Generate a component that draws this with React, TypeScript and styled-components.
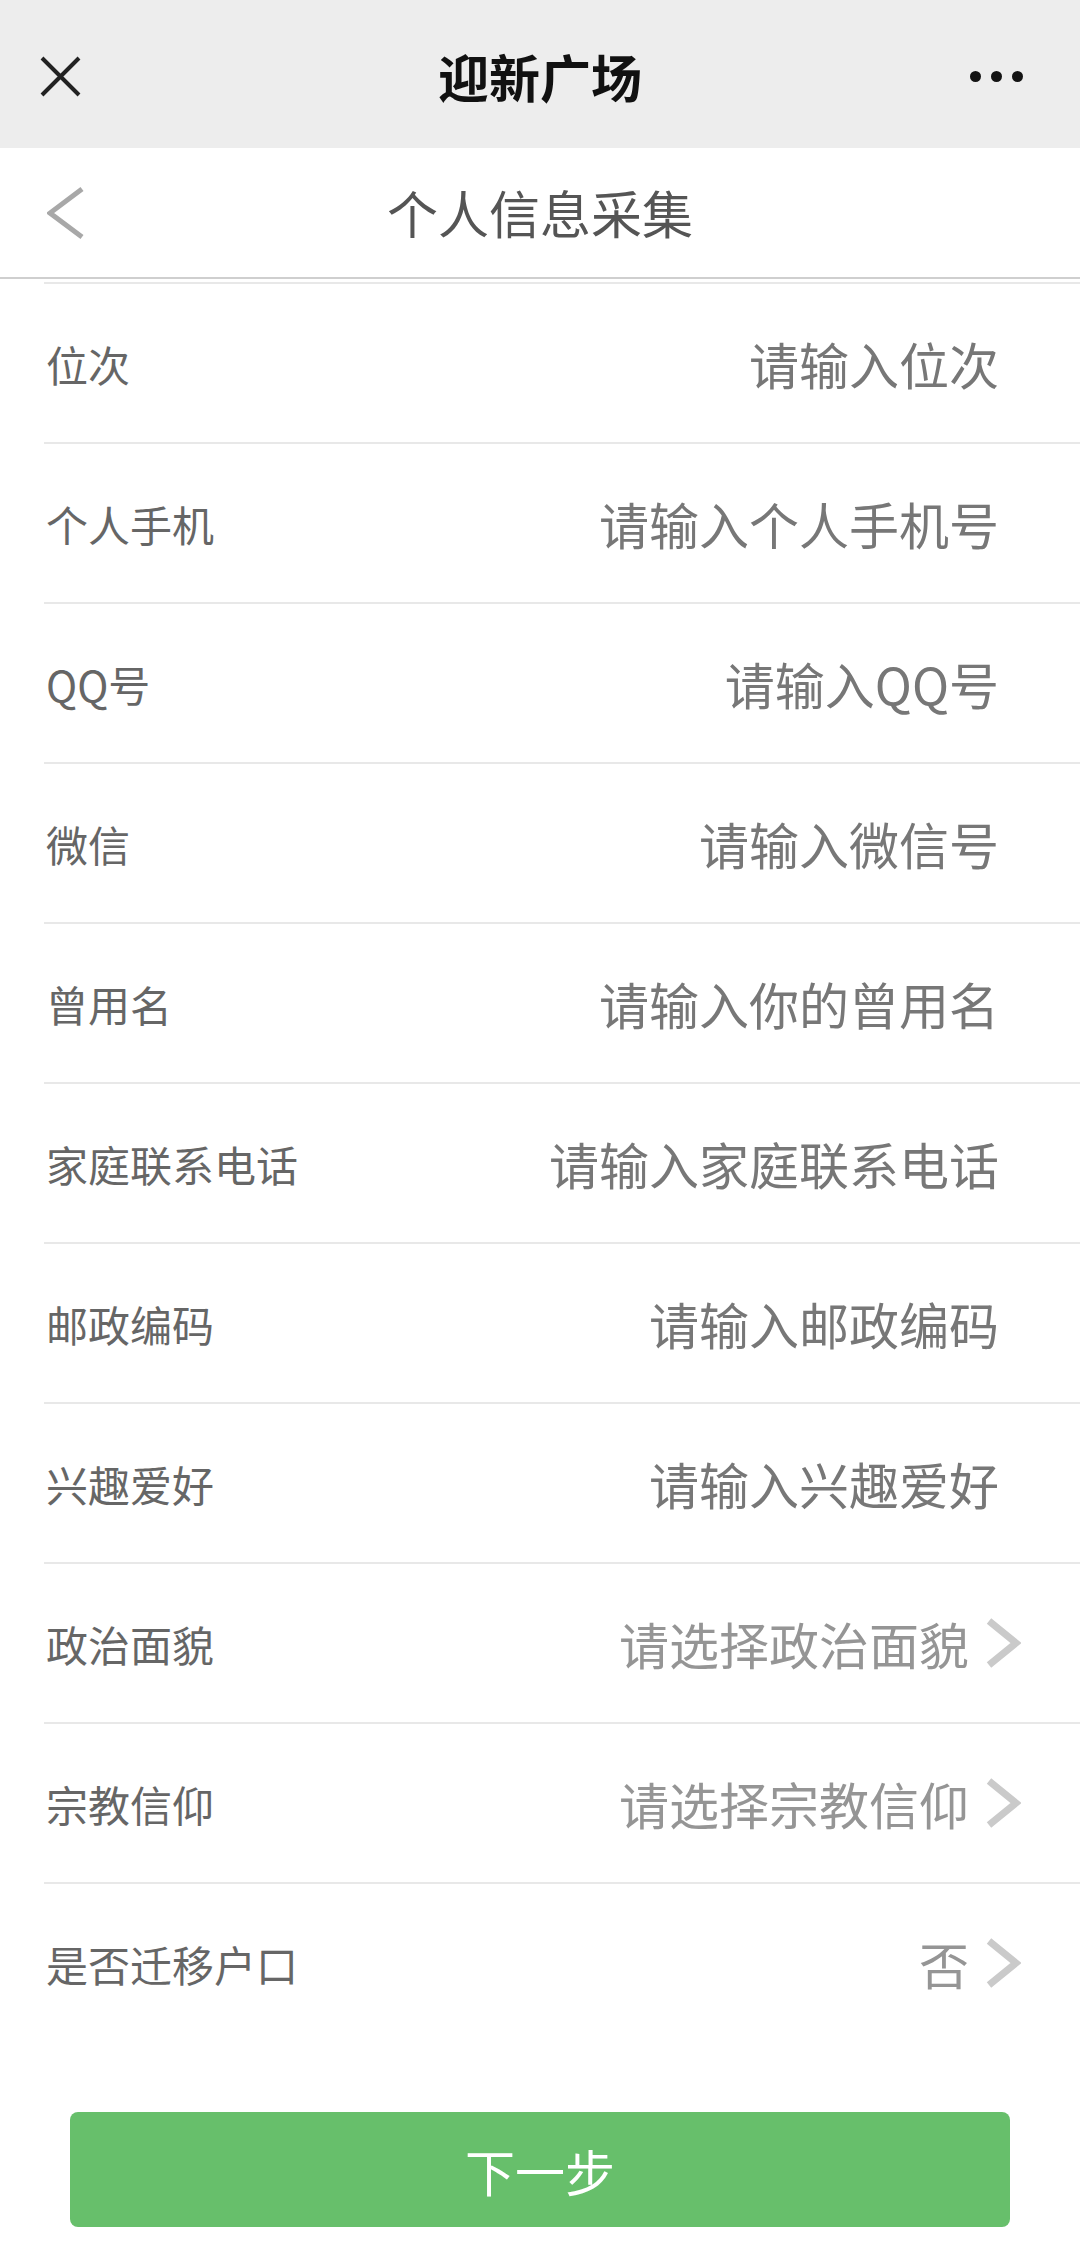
import React from "react";
import styled, { createGlobalStyle } from "styled-components";

const GlobalStyle = createGlobalStyle`
  html, body {
    margin: 0;
    padding: 0;
    background: #ffffff;
  }
  body {
    font-family: "Noto Sans CJK SC", "Noto Sans", sans-serif;
  }
  * {
    box-sizing: border-box;
  }
`;

const Page = styled.div`
  width: 1080px;
  min-height: 2260px;
  background: #ffffff;
  display: flex;
  flex-direction: column;
`;

const TopBar = styled.div`
  height: 148px;
  background: #ededed;
  display: grid;
  grid-template-columns: 1fr auto 1fr;
  align-items: center;
  padding-top: 4px;
`;

const TopTitle = styled.div`
  font-size: 51px;
  font-weight: 700;
  color: #111111;
  line-height: 1;
`;

const LeftSlot = styled.div<{ $pad: number }>`
  display: flex;
  align-items: center;
  padding-left: ${(p) => p.$pad}px;
`;

const RightSlot = styled.div`
  display: flex;
  justify-content: flex-end;
  align-items: center;
  gap: 10px;
  padding-right: 57px;
`;

const Dot = styled.span`
  width: 11px;
  height: 11px;
  border-radius: 50%;
  background: #141414;
`;

const SubHeader = styled.div`
  height: 131px;
  border-bottom: 2px solid #cfcfcf;
  display: grid;
  grid-template-columns: 1fr auto 1fr;
  align-items: center;
`;

const SubTitle = styled.div`
  font-size: 51px;
  color: #555555;
  line-height: 1;
`;

const List = styled.div`
  margin-top: 3px;
  display: flex;
  flex-direction: column;
`;

const Row = styled.div<{ $first?: boolean }>`
  height: 160px;
  margin-left: 44px;
  border-top: 2px solid #e8e8e8;
  display: flex;
  align-items: center;
  justify-content: space-between;
`;

const Label = styled.div`
  font-size: 42px;
  color: #666666;
  padding-left: 2px;
  white-space: nowrap;
`;

const InputField = styled.input`
  flex: 1;
  min-width: 0;
  border: none;
  outline: none;
  background: transparent;
  text-align: right;
  font-family: "Noto Sans CJK SC", "Noto Sans", sans-serif;
  font-size: 50px;
  color: #333333;
  padding: 0 81px 0 0;
  &::placeholder {
    color: #777777;
  }
`;

const SelectValue = styled.div`
  display: flex;
  align-items: center;
  gap: 16px;
  padding-right: 59px;
  font-size: 50px;
  color: #959595;
  white-space: nowrap;
`;

const Footer = styled.div`
  padding: 70px 70px 0;
`;

const NextButton = styled.button`
  width: 100%;
  height: 115px;
  border: none;
  border-radius: 8px;
  background: #67bf6b;
  color: #ffffff;
  font-family: "Noto Sans CJK SC", "Noto Sans", sans-serif;
  font-size: 50px;
  cursor: pointer;
`;

const CloseIcon = () => (
  <svg width="41" height="41" viewBox="0 0 41 41">
    <path d="M2 2 L39 39 M39 2 L2 39" stroke="#222" strokeWidth="4" fill="none" />
  </svg>
);

const BackIcon = () => (
  <svg width="38" height="52" viewBox="0 0 38 52">
    <polyline
      points="35,2 3,26 35,50"
      stroke="#a8a8a8"
      strokeWidth="5"
      fill="none"
      strokeLinejoin="miter"
    />
  </svg>
);

const ChevronIcon = () => (
  <svg width="36" height="50" viewBox="0 0 36 50">
    <polyline
      points="4,3 31,25 4,47"
      stroke="#cacaca"
      strokeWidth="7"
      fill="none"
      strokeLinejoin="miter"
    />
  </svg>
);

type Field =
  | { label: string; kind: "input"; placeholder: string }
  | { label: string; kind: "select"; value: string };

const fields: Field[] = [
  { label: "位次", kind: "input", placeholder: "请输入位次" },
  { label: "个人手机", kind: "input", placeholder: "请输入个人手机号" },
  { label: "QQ号", kind: "input", placeholder: "请输入QQ号" },
  { label: "微信", kind: "input", placeholder: "请输入微信号" },
  { label: "曾用名", kind: "input", placeholder: "请输入你的曾用名" },
  { label: "家庭联系电话", kind: "input", placeholder: "请输入家庭联系电话" },
  { label: "邮政编码", kind: "input", placeholder: "请输入邮政编码" },
  { label: "兴趣爱好", kind: "input", placeholder: "请输入兴趣爱好" },
  { label: "政治面貌", kind: "select", value: "请选择政治面貌" },
  { label: "宗教信仰", kind: "select", value: "请选择宗教信仰" },
  { label: "是否迁移户口", kind: "select", value: "否" },
];

const App = () => {
  return (
    <Page>
      <GlobalStyle />
      <TopBar>
        <LeftSlot $pad={40}>
          <CloseIcon />
        </LeftSlot>
        <TopTitle>迎新广场</TopTitle>
        <RightSlot>
          <Dot />
          <Dot />
          <Dot />
        </RightSlot>
      </TopBar>

      <SubHeader>
        <LeftSlot $pad={47}>
          <BackIcon />
        </LeftSlot>
        <SubTitle>个人信息采集</SubTitle>
        <div />
      </SubHeader>

      <List>
        {fields.map((field, index) => (
          <Row key={index}>
            <Label>{field.label}</Label>
            {field.kind === "input" ? (
              <InputField placeholder={field.placeholder} />
            ) : (
              <SelectValue>
                {field.value}
                <ChevronIcon />
              </SelectValue>
            )}
          </Row>
        ))}
      </List>

      <Footer>
        <NextButton>下一步</NextButton>
      </Footer>
    </Page>
  );
};

export default App;
